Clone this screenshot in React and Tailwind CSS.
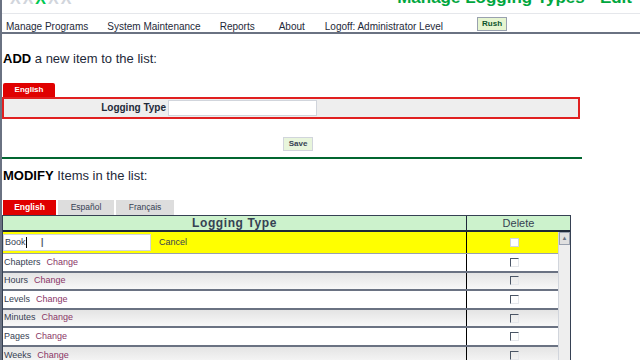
import React from 'react';

const rows = ['Chapters', 'Hours', 'Levels', 'Minutes', 'Pages', 'Weeks', 'Words'];

function Logo() {
  return (
    <div className="flex gap-[2px] text-[16px] font-bold leading-none -mt-[9px] text-gray-300">
      <span>X</span><span>X</span><span className="text-green-500">X</span><span>X</span><span>X</span>
    </div>
  );
}

export default function App() {
  return (
    <div className="w-[640px] h-[360px] overflow-hidden bg-white text-black border-l-2 border-gray-500" style={{ fontFamily: '"Liberation Sans", Arial, sans-serif' }}>
      {/* top strip, cut off by the window */}
      <div className="h-[13px] overflow-hidden flex items-start pl-[8px] pr-2">
        <Logo />
        <div className="ml-auto -mt-[15px] text-[17px] font-bold text-green-600 whitespace-nowrap">Manage Logging Types - Edit</div>
      </div>

      {/* navigation */}
      <div className="h-[21px] border-t border-gray-200 border-b-2 border-b-gray-500 flex items-end pl-[4px] text-[10px] leading-[11px] text-gray-800">
        <span className="mr-[19px]">Manage Programs</span>
        <span className="mr-[19px]">System Maintenance</span>
        <span className="mr-[24px]">Reports</span>
        <span className="mr-[20px]">About</span>
        <span>Logoff: Administrator Level</span>
        <button className="ml-[34px] self-start mt-[3px] h-[14px] px-[4px] text-[8px] font-bold text-green-900 bg-[#e6f5d0] border border-gray-400 leading-none">Rush</button>
      </div>

      {/* ADD section */}
      <div className="pt-[15px] pl-[1px] text-[13px] text-gray-800"><b className="text-black">ADD</b> a new item to the list:</div>
      <div className="mt-[14px] flex pl-[1px]">
        <div className="h-[14px] w-[52px] bg-[#e00000] rounded-t-[2px] text-white text-[8px] font-bold flex items-center justify-center">English</div>
      </div>
      <div className="w-[578px] h-[22px] border-2 border-[#e02020] bg-[#eeeeee] flex items-center">
        <div className="w-[164px] text-right pr-[2px] text-[10px] font-bold text-gray-800">Logging Type</div>
        <div className="w-[149px] h-[16px] bg-white border border-gray-300" />
      </div>
      <div className="w-[578px] flex justify-center pt-[18px] pl-[14px]">
        <button className="h-[14px] px-[5px] text-[8px] font-bold text-gray-700 bg-[#e8f5dc] border border-gray-300 leading-none">Save</button>
      </div>
      <div className="mt-[6px] w-[580px] h-[2px] bg-green-800" />

      {/* MODIFY section */}
      <div className="pt-[7px] pl-[1px] text-[13px] text-gray-800"><b className="text-black">MODIFY</b> Items in the list:</div>
      <div className="mt-[15px] flex gap-[2px] pl-[1px] text-[8.5px]">
        <div className="h-[15px] w-[53px] bg-[#e00000] text-white font-bold flex items-center justify-center">English</div>
        <div className="h-[15px] w-[56px] bg-[#dddddd] text-gray-700 flex items-center justify-center">Español</div>
        <div className="h-[15px] w-[58px] bg-[#dddddd] text-gray-700 flex items-center justify-center">Français</div>
      </div>

      <div className="w-[569px] border border-gray-700">
        <div className="h-[16px] flex bg-[#ccf2cc] border-b-2 border-gray-800">
          <div className="w-[464px] border-r border-gray-800 text-center font-bold text-[12px] text-gray-700 tracking-wider leading-[15px]">Logging Type</div>
          <div className="flex-1 text-center text-[11px] text-gray-700 leading-[15px]">Delete</div>
        </div>
        <div className="flex">
          <div className="w-[555px]">
            <div className="h-[22px] flex bg-[#ffff00] border-b border-gray-400">
              <div className="w-[464px] flex items-center border-r border-black">
                <div className="w-[148px] h-[17px] bg-white border border-gray-300 flex items-center text-[9px] pl-[1px] text-gray-700">
                  Book<span className="w-[1px] h-[11px] bg-black" />
                  <span className="ml-[14px] text-gray-600 text-[12px] leading-none">I</span>
                </div>
                <span className="ml-[8px] text-[9px] text-gray-700">Cancel</span>
              </div>
              <div className="flex-1 flex items-center justify-center pl-[3px]">
                <span className="w-[9px] h-[9px] bg-white border border-gray-300" />
              </div>
            </div>
            {rows.map((r, i) => (
              <div key={r} className={`h-[18.6px] flex border-b-2 border-gray-500 ${i % 2 === 0 ? 'bg-white' : 'bg-gradient-to-b from-[#e4e4e4] to-[#f8f8f8]'}`}>
                <div className="w-[464px] flex items-center border-r border-black text-[9px] text-gray-700 pl-[1px]">
                  {r}<span className="ml-[6px] text-[#8a3566]">Change</span>
                </div>
                <div className="flex-1 flex items-center justify-center pl-[3px]">
                  <span className="w-[9px] h-[9px] border-t border-l border-gray-600 border-r border-b border-r-gray-200 border-b-gray-200" />
                </div>
              </div>
            ))}
          </div>
          <div className="flex-1 bg-[#eeeeee] border-l border-gray-300">
            <div className="h-[13px] bg-[#e0e0e0] border border-gray-400 flex items-center justify-center text-[6px] text-gray-500">▲</div>
          </div>
        </div>
      </div>
    </div>
  );
}
